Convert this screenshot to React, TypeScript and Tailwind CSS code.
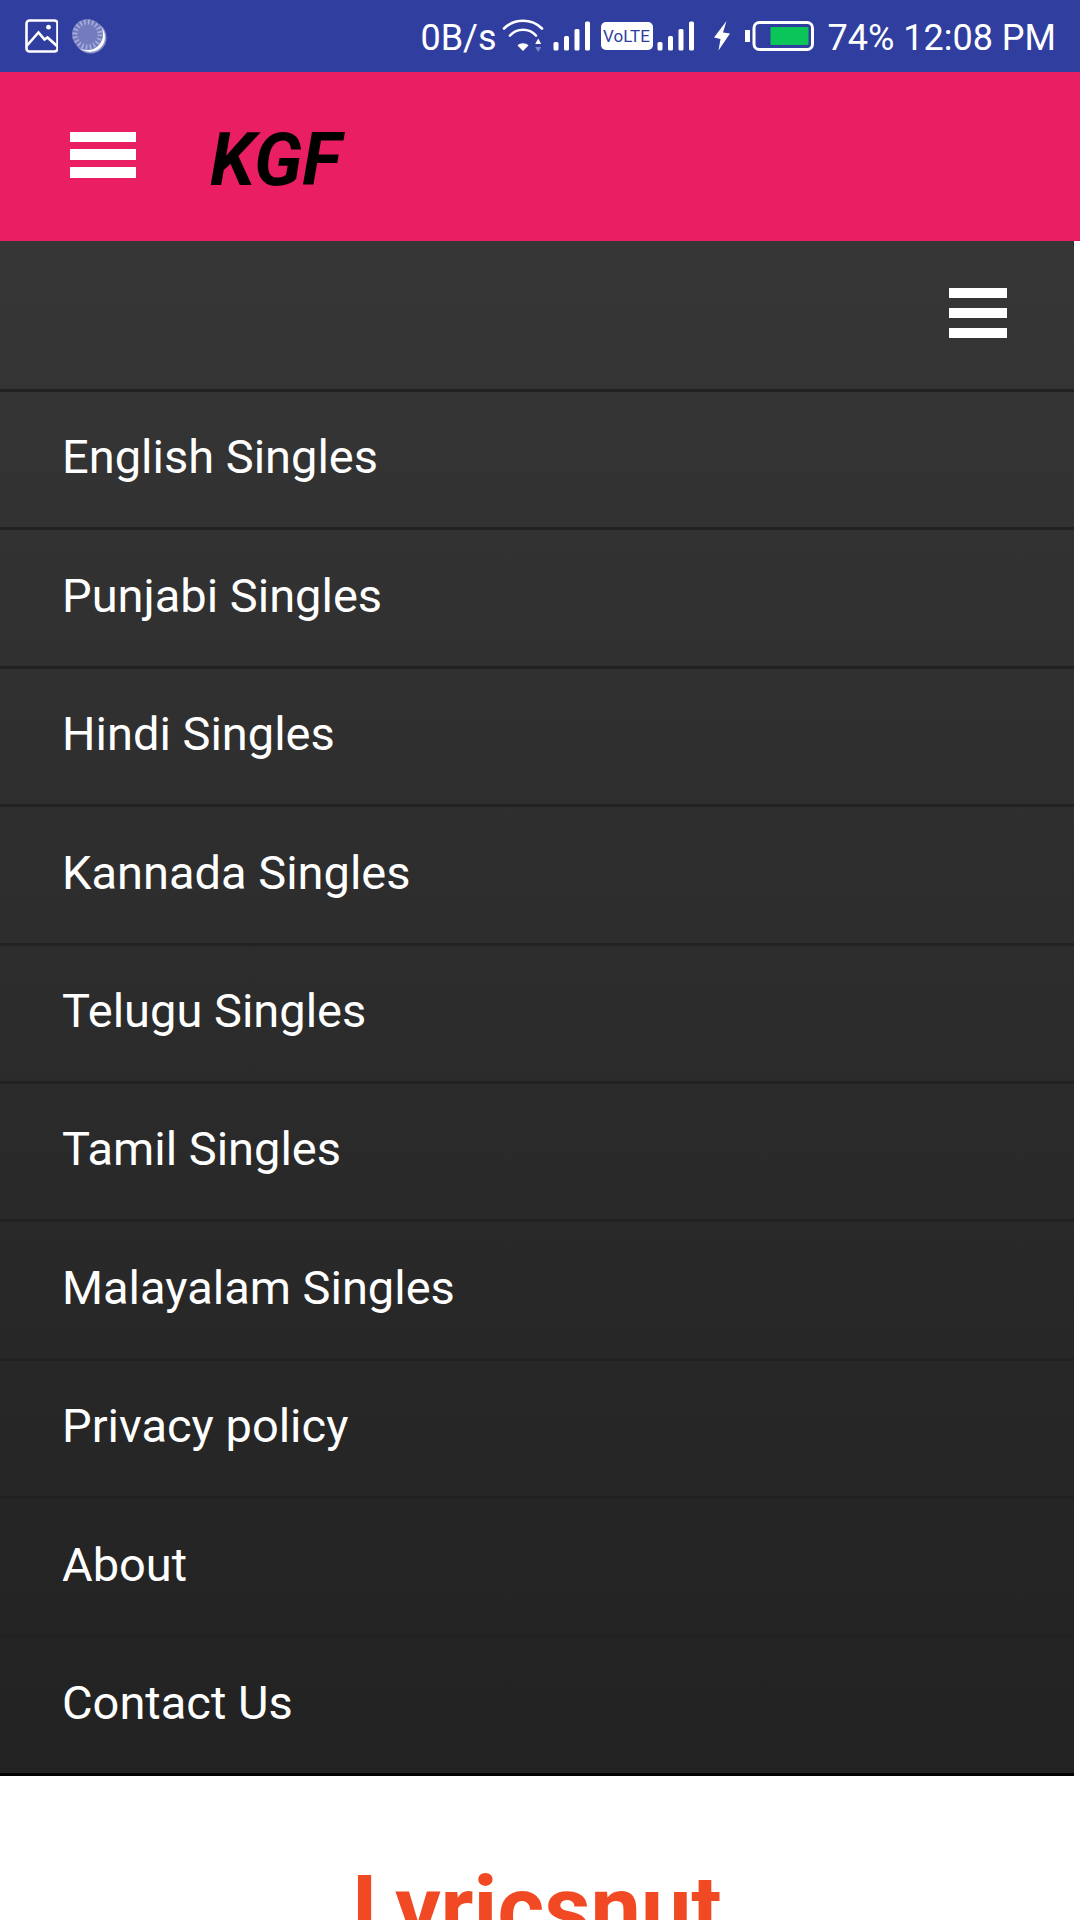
const items = [
  'English Singles',
  'Punjabi Singles',
  'Hindi Singles',
  'Kannada Singles',
  'Telugu Singles',
  'Tamil Singles',
  'Malayalam Singles',
  'Privacy policy',
  'About',
  'Contact Us',
];

function PictureIcon() {
  return (
    <svg width="34" height="34" viewBox="0 0 34 34" fill="none" stroke="#fff" strokeWidth="2.6" aria-hidden="true">
      <rect x="2.5" y="1.5" width="31" height="31" rx="3" />
      <path d="M3 26.5 14.500 13.500 20.500 20.500 23.500 18.500 33 27" />
      <circle cx="24.500" cy="8.200" r="2.400" fill="#fff" stroke="none" />
    </svg>
  );
}

function DialIcon() {
  return (
    <svg width="35" height="36" viewBox="0 0 35 36" aria-hidden="true">
      <circle cx="18.5" cy="19.5" r="16" fill="#8f95cc" />
      <circle cx="18" cy="19" r="15" fill="#fff" />
      <circle cx="15.5" cy="16.5" r="15.5" fill="#747cbf" />
      <circle cx="15.5" cy="16.5" r="12.5" fill="none" stroke="#a9aedb" strokeWidth="5" strokeDasharray="1.6 2.33" />
    </svg>
  );
}

function WifiIcon() {
  return (
    <svg width="44" height="36" viewBox="0 0 44 36" fill="none" stroke="#fff" strokeWidth="2.6" strokeLinecap="round" aria-hidden="true">
      <path d="M3 10.5C13.5 0.2 30.5 0.2 41 10.5" />
      <path d="M9 17.5C16 9.8 28 9.8 35 17.5" />
      <path d="M16.5 27.5C19 24.5 25 24.5 27.5 27.5L22 33Z" fill="#fff" stroke="none" />
      <path d="M34.2 26 37.200 20.500 40.200 26Z" fill="#fff" stroke="none" />
      <path d="M34.2 29 37.200 34 40.200 29Z" fill="#7d86cc" stroke="none" />
    </svg>
  );
}

function SignalIcon() {
  return (
    <svg width="38" height="30" viewBox="0 0 38 30" fill="#fff" aria-hidden="true">
      <rect x="0.5" y="21" width="5" height="8.5" rx="1.5" />
      <rect x="11" y="15" width="5" height="14.5" rx="1.5" />
      <rect x="21.5" y="8" width="5" height="21.5" rx="1.5" />
      <rect x="32" y="0.5" width="5" height="29" rx="1.5" />
    </svg>
  );
}

function BoltIcon() {
  return (
    <svg width="18" height="30" viewBox="0 0 18 30" fill="#fff" aria-hidden="true">
      <path d="M13.5 0 1 16.5 7.5 18 5.5 29.5 17 12.5 10 11.5Z" />
    </svg>
  );
}

function BatteryIcon() {
  return (
    <svg width="69" height="30" viewBox="0 0 69 30" aria-hidden="true">
      <rect x="0" y="9" width="5" height="12" fill="#fff" />
      <rect x="9" y="1.5" width="58.5" height="27" rx="5.5" fill="none" stroke="#fff" strokeWidth="3" />
      <rect x="25.5" y="6" width="38" height="18" rx="1" fill="#0cc558" />
    </svg>
  );
}

export default function App() {
  return (
    <div className="flex h-screen flex-col overflow-hidden bg-white font-['Roboto',sans-serif]">
      <div className="flex h-[72px] shrink-0 items-center justify-between bg-[#303f9f] pl-6 pr-6 text-4xl text-white">
        <div className="flex items-center gap-[14px]">
          <PictureIcon />
          <DialIcon />
        </div>
        <div className="flex items-center">
          <span className="mr-1 pt-1">0B/s</span>
          <WifiIcon />
          <span className="ml-2 flex items-center">
            <SignalIcon />
            <span className="ml-[10px] mr-1 flex h-7 w-[52px] items-center justify-center rounded-[5px] bg-white text-[17px] leading-7 text-[#303f9f]">
              VoLTE
            </span>
            <SignalIcon />
          </span>
          <span className="ml-[18px] mr-[14px] flex items-center gap-[14px]">
            <BoltIcon />
            <BatteryIcon />
          </span>
          <span className="whitespace-nowrap pt-1">74% 12:08 PM</span>
        </div>
      </div>

      <header className="flex h-[169px] shrink-0 items-center bg-[#e91e63] pl-[70px]">
        <button type="button" aria-label="Open menu" className="flex w-[66px] flex-col gap-[7px] pb-1">
          <span className="h-[10px] bg-white" />
          <span className="h-[11px] bg-white" />
          <span className="h-[11px] bg-white" />
        </button>
        <h1 className="ml-[74px] pt-2 text-[73px] font-bold italic leading-none text-black">KGF</h1>
      </header>

      <nav className="mr-[6px] shrink-0 bg-linear-to-b from-[#363636] to-[#222222] text-[47px] text-white">
        <div className="flex h-[151px] items-center justify-end border-b-[3px] border-[#222222] pr-[67px]">
          <button type="button" aria-label="Close menu" className="flex w-[58px] flex-col gap-[10px] pb-1">
            <span className="h-[10px] bg-white" />
            <span className="h-[10px] bg-white" />
            <span className="h-[10px] bg-white" />
          </button>
        </div>
        <ul className="grid min-h-[1384px] auto-rows-fr">
          {items.map((item) => (
            <li key={item} className="flex border-b-[3px] border-[#222222] last:border-black">
              <a href="#" className="flex flex-1 items-center pb-1 pl-[62px]">
                {item}
              </a>
            </li>
          ))}
        </ul>
      </nav>

      <main className="pt-[89px] pr-[6px] text-center">
        <h2 className="text-[90px] font-bold leading-none text-[#f04923]">Lyricsnut</h2>
      </main>
    </div>
  );
}
